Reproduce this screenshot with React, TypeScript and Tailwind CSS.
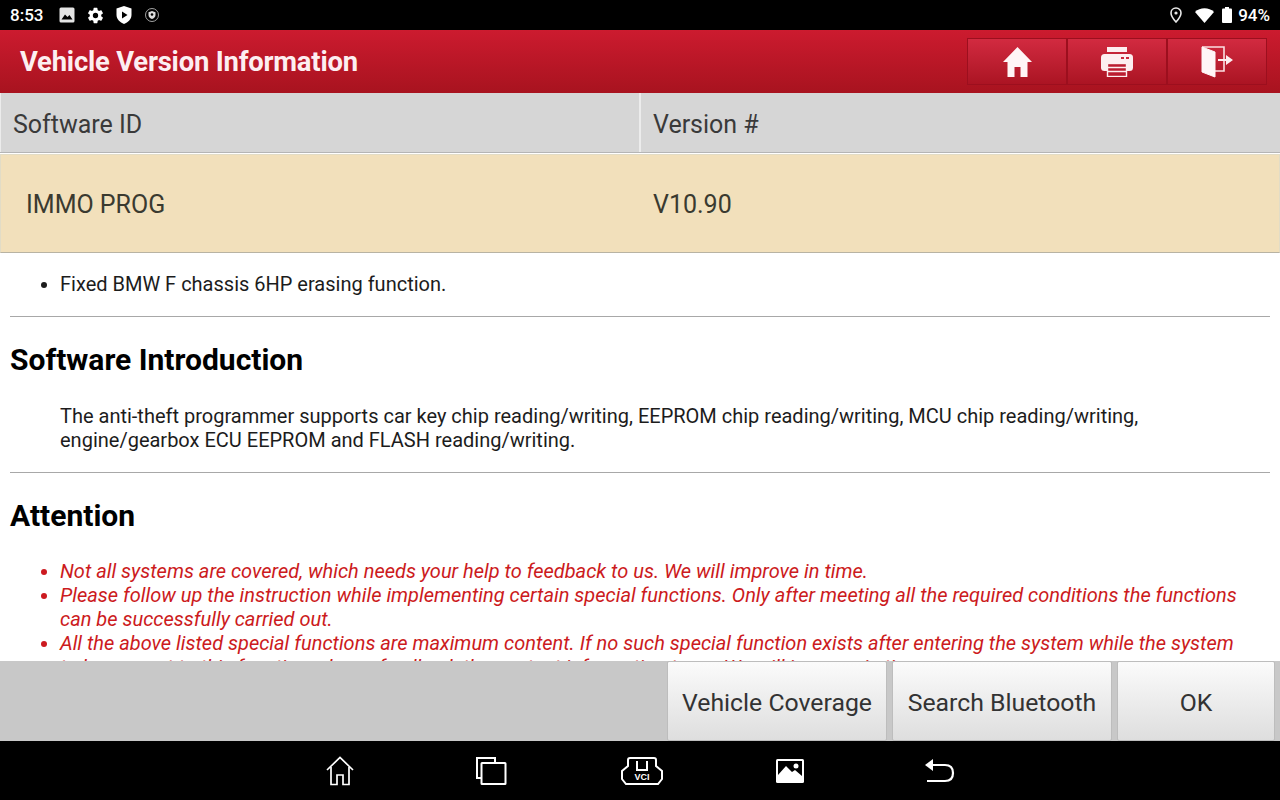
import { IoSettingsSharp } from "react-icons/io5";

function HomeIcon() {
    return (
        <svg width="29" height="30" viewBox="0 0 29 30">
            <path d="M14.5 0 L29 15 H24.5 V30 H17.5 V20 H11.5 V30 H4.5 V15 H0 Z" fill="#fff5f6" />
        </svg>
    )
}

function PrinterIcon() {
    return (
        <svg width="32" height="30" viewBox="0 0 32 30">
            <rect x="6" y="0" width="20" height="5" fill="#fdeef0" />
            <rect x="0" y="7" width="32" height="17" rx="3.5" fill="#fdeef0" />
            <rect x="20" y="10" width="3" height="2" fill="#c9283c" />
            <rect x="25" y="10" width="3" height="2" fill="#c9283c" />
            <rect x="6.5" y="16.5" width="19" height="13" fill="#bb1c30" stroke="#fdeef0" strokeWidth="1.4" />
            <path d="M7 20.5 H25 M7 24.5 H25" stroke="#fdeef0" strokeWidth="1.4" />
        </svg>
    )
}

function ExitIcon() {
    return (
        <svg width="32" height="32" viewBox="0 0 32 32" fill="none">
            <path d="M1 1 H23 V25 H14" stroke="#fbdfe2" strokeWidth="1.6" />
            <path d="M1 1 L14 6 V31 L1 26 Z" fill="#fff5f6" stroke="#fff5f6" strokeWidth="1" />
            <path d="M17 13 H25 V9 L32 14 L25 19 V15 H17 Z" fill="#fdeef0" />
        </svg>
    )
}

function HeaderButton({ children }: { children: React.ReactNode }) {
    return (
        <div className="flex h-[47px] w-[100px] items-center justify-center border border-[#9c0f1e] bg-gradient-to-b from-[#d22a40] to-[#ab1423]">
            {children}
        </div>
    )
}

function FooterButton({ label, width }: { label: string, width: string }) {
    return (
        <div className={`flex h-[80px] items-center justify-center rounded-[2px] border border-[#bdbdbd] bg-gradient-to-b from-[#fbfbfb] to-[#dedede] pt-[4px] text-[24.8px] text-[#333333] ${width}`}>
            {label}
        </div>
    )
}

function StatusBar() {
    return (
        <div className="flex h-[30px] items-center justify-between bg-black pl-[10px] pr-[10px] text-white">
            <div className="flex items-center">
                <span className="text-[17px] font-medium leading-none">8:53</span>
                <svg className="ml-[16px]" width="16" height="16" viewBox="0 0 16 16">
                    <rect x="0.5" y="0.5" width="15" height="15" rx="1.5" fill="#e4e4e4" />
                    <path d="M2.5 12.5 L6 7.5 L8.5 10 L10.5 8 L13.5 12.5 Z" fill="#000000" />
                </svg>
                <IoSettingsSharp className="ml-[12px] text-[17px]" />
                <svg className="ml-[12px]" width="16" height="18" viewBox="0 0 16 18">
                    <path d="M8 0 L15.5 2.5 V9 C15.5 13 12 16.5 8 18 C4 16.5 0.5 13 0.5 9 V2.5 Z" fill="#ffffff" />
                    <path d="M6 5.5 L11.5 9 L6 12.5 Z" fill="#000000" />
                </svg>
                <svg className="ml-[13px]" width="14" height="14" viewBox="0 0 14 14">
                    <circle cx="7" cy="7" r="6.5" fill="none" stroke="#cccccc" strokeWidth="0.8" />
                    <path d="M7 3 L10.5 4.2 V7 C10.5 9 8.8 10.5 7 11 C5.2 10.5 3.5 9 3.5 7 V4.2 Z" fill="#dddddd" />
                    <circle cx="7" cy="6.5" r="1.3" fill="#000000" />
                </svg>
            </div>
            <div className="flex items-center">
                <svg width="12" height="16" viewBox="0 0 12 16" fill="none">
                    <path d="M6 1 C3 1 1 3.2 1 6 C1 9.5 6 15 6 15 C6 15 11 9.5 11 6 C11 3.2 9 1 6 1 Z" stroke="#e8e8e8" strokeWidth="1.6" />
                    <circle cx="6" cy="6" r="1.6" fill="#e8e8e8" />
                </svg>
                <svg className="ml-[13px]" width="19" height="15" viewBox="0 0 19 15">
                    <path d="M0 4 C5 -1 14 -1 19 4 L9.5 15 Z" fill="#ffffff" />
                </svg>
                <svg className="ml-[8px]" width="10" height="16" viewBox="0 0 10 16">
                    <rect x="3" y="0" width="4" height="2" fill="#ffffff" />
                    <rect x="0" y="1.5" width="10" height="14.5" rx="1" fill="#ffffff" />
                </svg>
                <span className="ml-[6px] text-[17px] font-medium leading-none">94%</span>
            </div>
        </div>
    )
}

function BottomNav() {
    return (
        <div className="flex h-[59px] items-center bg-black pl-[325px]">
            <svg width="30" height="30" viewBox="0 0 30 30" fill="none" stroke="#ffffff" strokeWidth="1.7">
                <path d="M2 14 L15 1.5 L28 14" />
                <path d="M6 11 V28.5 H12 V19 H18 V28.5 H24 V11" />
            </svg>
            <svg className="ml-[120px]" width="32" height="30" viewBox="0 0 32 30" fill="none" stroke="#ffffff" strokeWidth="2">
                <path d="M6 22 H2 V2 H20 V7" />
                <rect x="6.5" y="7" width="24" height="21" rx="0.5" />
            </svg>
            <svg className="ml-[114px]" width="42" height="28" viewBox="0 0 42 28" fill="none" stroke="#ffffff" strokeWidth="2">
                <path d="M7 9 V3 Q7 1 9 1 H33 Q35 1 35 3 V9 L41 14 V22 L37 27 H5 L1 22 V14 Z" />
                <path d="M16 4 V13 H26 V4" />
                <text x="21" y="23" textAnchor="middle" fontSize="9" fontWeight="700" fill="#ffffff" stroke="none" fontFamily="Liberation Sans, sans-serif">VCI</text>
            </svg>
            <svg className="ml-[113px]" width="28" height="24" viewBox="0 0 28 24">
                <rect x="0" y="0" width="28" height="24" rx="1.5" fill="#ffffff" />
                <rect x="2" y="2" width="24" height="15" fill="#000000" />
                <path d="M2 16 L10 7 L16 13 L19 11 L26 17 V22 H2 Z" fill="#ffffff" />
                <circle cx="20" cy="7" r="2.5" fill="#ffffff" />
            </svg>
            <svg className="ml-[121px]" width="30" height="24" viewBox="0 0 30 24" fill="none">
                <path d="M8 0 L0 6 L8 12 Z" fill="#ffffff" />
                <path d="M7 6 H20 C25 6 28 9 28 14 C28 19 25 22 20 22 H2" stroke="#ffffff" strokeWidth="2.2" />
            </svg>
        </div>
    )
}

export default function App() {
    return (
        <div className="flex h-[800px] w-[1280px] flex-col overflow-hidden bg-white font-['Roboto',sans-serif]">
            <StatusBar />

            <div className="flex h-[63px] items-center justify-between bg-gradient-to-b from-[#cc1b2f] to-[#a8131f] pl-[20px] pr-[13px]">
                <h1 className="pt-[2px] text-[27.4px] font-bold tracking-[-0.2px] text-[#fdeff1]">Vehicle Version Information</h1>
                <div className="flex">
                    <HeaderButton><HomeIcon /></HeaderButton>
                    <HeaderButton><PrinterIcon /></HeaderButton>
                    <HeaderButton><ExitIcon /></HeaderButton>
                </div>
            </div>

            <div className="flex h-[60px] border-b border-[#b5b5b5] bg-[#ececec] text-[25px] text-[#3a3a3a]">
                <div className="ml-px flex w-[638px] items-center bg-[#d6d6d6] pl-[12px] pt-[4px]">Software ID</div>
                <div className="ml-[2px] flex flex-1 items-center bg-[#d6d6d6] pl-[12px] pt-[4px]">Version #</div>
            </div>

            <div className="mt-px flex h-[99px] items-center border border-[#e2dcc6] border-b-[#b8b3a3] bg-[#f2e0bb] pt-[3px] text-[25px] text-[#3a3a30]">
                <div className="w-[652px] pl-[25px]">IMMO PROG</div>
                <div>V10.90</div>
            </div>

            <div className="flex-1 overflow-hidden px-[10px] pt-[19px] text-[20px] leading-[24px] text-[#1c1c1c]">
                <ul className="list-disc pl-[50px]">
                    <li>Fixed BMW F chassis 6HP erasing function.</li>
                </ul>
                <hr className="mt-[20px] border-[#a8a8a8]" />
                <h2 className="mt-[26px] text-[30px] font-bold leading-[34px] text-black">Software Introduction</h2>
                <p className="mt-[27px] pl-[50px]">
                    The anti-theft programmer supports car key chip reading/writing, EEPROM chip reading/writing, MCU chip reading/writing, engine/gearbox ECU EEPROM and FLASH reading/writing.
                </p>
                <hr className="mt-[20px] border-[#a8a8a8]" />
                <h2 className="mt-[26px] text-[30px] font-bold leading-[34px] text-black">Attention</h2>
                <ul className="mt-[26px] list-disc pl-[50px] pr-[20px] italic text-[#cc1a20]">
                    <li>Not all systems are covered, which needs your help to feedback to us. We will improve in time.</li>
                    <li>Please follow up the instruction while implementing certain special functions. Only after meeting all the required conditions the functions can be successfully carried out.</li>
                    <li>All the above listed special functions are maximum content. If no such special function exists after entering the system while the system to be present to this function, please feedback the content information to us. We will improve in time.</li>
                </ul>
            </div>

            <div className="flex h-[80px] justify-end gap-[5px] bg-[#c8c8c8] pr-[5px]">
                <FooterButton label="Vehicle Coverage" width="w-[220px]" />
                <FooterButton label="Search Bluetooth" width="w-[220px]" />
                <FooterButton label="OK" width="w-[158px]" />
            </div>

            <BottomNav />
        </div>
    )
}
